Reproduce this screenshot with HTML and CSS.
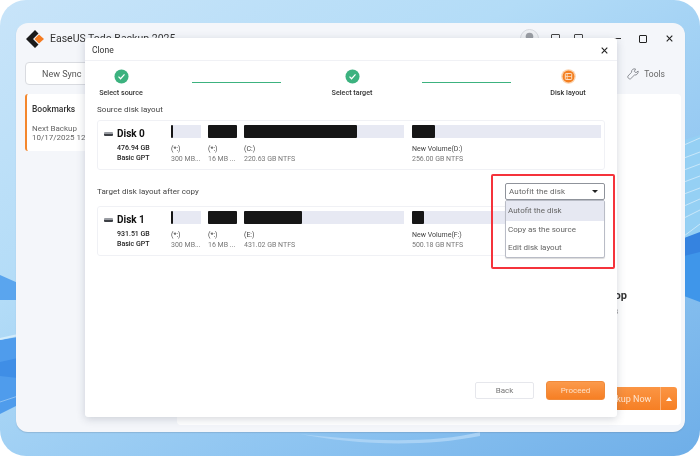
FILE: index.html
```html
<!DOCTYPE html>
<html lang="en">
<head>
<meta charset="utf-8">
<title>EaseUS Todo Backup - Clone</title>
<link rel="stylesheet" href="styles.css">
</head>
<body>
<div class="desktop">
  <svg class="waves" viewBox="0 0 700 456" preserveAspectRatio="none" aria-hidden="true">
    <path d="M0 275 L18 283 L18 300 L0 300 Z" fill="#5aa5ee"/>
    <path d="M0 340 L18 337 L18 405 L0 414 Z" fill="#4f9cec"/>
    <path d="M0 362 L18 358 L18 378 L0 376 Z" fill="#3f8ee6"/>
    <path d="M0 339 L18 335" stroke="#d3ecfb" stroke-width="2" fill="none"/>
    <path d="M0 402 L18 396" stroke="#8cc0f3" stroke-width="1" fill="none"/>
    <path d="M684 238 L700 231 L700 302 L684 296 Z" fill="#3f96ea"/>
    <path d="M684 238 L700 231 L700 252 L684 256 Z" fill="#3583e0"/>
    <path d="M684 140 L700 135 V232 L684 238 Z" fill="#95d0f4"/>
    <g stroke="#d6edfb" stroke-width="1" fill="none" opacity=".8">
      <path d="M684 145 L700 138"/><path d="M684 158 L700 152"/><path d="M684 170 L700 164"/>
      <path d="M684 182 L700 176"/><path d="M684 194 L700 188"/><path d="M684 206 L700 199"/>
      <path d="M684 218 L700 210"/><path d="M684 236 L700 224"/>
    </g>
    <path d="M300 434 C350 440 430 445 480 432 L480 436 C420 448 350 444 300 434 Z" fill="#a9d2f5"/>
  </svg>

  <div class="app">
    <header class="app-head">
      <div class="brand">
        <svg class="logo" viewBox="0 0 18 18" aria-hidden="true">
          <path d="M9 0 L12.5 3.5 L7 9 L12.5 14.5 L9 18 L0 9 Z" fill="#1a1a1a"/>
          <path d="M13 4.5 L18 9 L13 13.5 L8.5 9 Z" fill="#f47a20"/>
        </svg>
        <span class="brand-name">EaseUS Todo Backup 2025</span>
      </div>
      <div class="win-tools">
        <svg class="avatar" viewBox="0 0 20 20" aria-hidden="true">
          <circle cx="10" cy="10" r="9.5" fill="#eef0f3" stroke="#d5d7dc"/>
          <circle cx="10" cy="8" r="4" fill="#9a9da3"/>
          <path d="M3 18 C4 12 16 12 17 18 Z" fill="#9a9da3"/>
        </svg>
        <span class="tool-square"></span>
        <span class="tool-square tool-second"></span>
        <span class="win-min"></span>
        <span class="win-max"></span>
        <svg class="win-close" viewBox="0 0 10 10" aria-hidden="true"><path d="M1 1 L9 9 M9 1 L1 9" stroke="#222" stroke-width="1.6"/></svg>
      </div>
    </header>
    <div class="toolbar">
      <button class="new-sync">New Sync</button>
      <div class="tools">
        <svg class="wrench" viewBox="0 0 14 14" aria-hidden="true"><path d="M13 3.5 L10.5 5.5 L8.5 4 L10 1.2 C7.5 .2 5 2 5.3 5 L1 9.5 C.2 11 2.5 13.5 4.2 12.6 L8.6 8.3 C11.5 8.6 13.5 6 13 3.5 Z" fill="none" stroke="#7d8087"/></svg>
        <span>Tools</span>
      </div>
    </div>
    <div class="app-body">
      <aside class="bookmark">
        <div class="bm-title">Bookmarks</div>
        <div class="bm-sub">Next Backup</div>
        <div class="bm-sub">10/17/2025 12:00</div>
      </aside>
      <main class="panel">
        <div class="panel-info">
          <div class="panel-name">Desktop</div>
          <div class="panel-size">120 GB</div>
        </div>
        <div class="backup-btn">
          <span class="backup-label">Backup Now</span>
          <span class="backup-arrow"></span>
        </div>
      </main>
    </div>
  </div>

  <section class="dialog">
    <header class="dlg-head">
      <span>Clone</span>
      <svg class="dlg-close" viewBox="0 0 10 10" aria-hidden="true"><path d="M1 1 L9 9 M9 1 L1 9" stroke="#222" stroke-width="1.6"/></svg>
    </header>
    <div class="stepper">
      <div class="step">
        <svg class="step-icon" viewBox="0 0 16 16" aria-hidden="true"><circle cx="8" cy="8" r="7.5" fill="#3cb27f"/><path d="M4.8 8.2 L7 10.4 L11.2 5.8" fill="none" stroke="#fff" stroke-width="1.3"/></svg>
        <span>Select source</span>
      </div>
      <span class="step-line"></span>
      <div class="step">
        <svg class="step-icon" viewBox="0 0 16 16" aria-hidden="true"><circle cx="8" cy="8" r="7.5" fill="#3cb27f"/><path d="M4.8 8.2 L7 10.4 L11.2 5.8" fill="none" stroke="#fff" stroke-width="1.3"/></svg>
        <span>Select target</span>
      </div>
      <span class="step-line"></span>
      <div class="step">
        <svg class="step-icon" viewBox="0 0 16 16" aria-hidden="true"><circle cx="8" cy="8" r="7.8" fill="#fbd3ae"/><circle cx="8" cy="8" r="6.3" fill="#f47f20"/><rect x="4.6" y="4.8" width="6.8" height="6.4" rx=".8" fill="none" stroke="#fbe3cc" stroke-width="1"/><path d="M4.6 8 H11.4 M6.6 4.8 V11.2" stroke="#fbe3cc" stroke-width=".8"/></svg>
        <span>Disk layout</span>
      </div>
    </div>

    <h2 class="sec-title">Source disk layout</h2>
    <div class="disk-card">
      <div class="disk-info">
        <div class="disk-name"><span class="disk-glyph"></span>Disk 0</div>
        <div class="disk-meta">476.94 GB</div>
        <div class="disk-meta">Basic GPT</div>
      </div>
      <div class="parts">
        <div class="part p1"><div class="bar"><i style="width:2px"></i></div><b>(*:)</b><small>300 MB...</small></div>
        <div class="part p2"><div class="bar"><i style="width:100%"></i></div><b>(*:)</b><small>16 MB ...</small></div>
        <div class="part p3"><div class="bar"><i style="width:113px"></i></div><b>(C:)</b><small>220.63 GB NTFS</small></div>
        <div class="part p4"><div class="bar"><i style="width:23px"></i></div><b>New Volume(D:)</b><small>256.00 GB NTFS</small></div>
      </div>
    </div>

    <div class="target-row">
      <h2 class="sec-title">Target disk layout after copy</h2>
    </div>
    <div class="disk-card">
      <div class="disk-info">
        <div class="disk-name"><span class="disk-glyph"></span>Disk 1</div>
        <div class="disk-meta">931.51 GB</div>
        <div class="disk-meta">Basic GPT</div>
      </div>
      <div class="parts">
        <div class="part p1"><div class="bar"><i style="width:2px"></i></div><b>(*:)</b><small>300 MB...</small></div>
        <div class="part p2"><div class="bar"><i style="width:100%"></i></div><b>(*:)</b><small>16 MB ...</small></div>
        <div class="part p3"><div class="bar"><i style="width:58px"></i></div><b>(E:)</b><small>431.02 GB NTFS</small></div>
        <div class="part p4"><div class="bar"><i style="width:12px"></i></div><b>New Volume(F:)</b><small>500.18 GB NTFS</small></div>
      </div>
    </div>

    <footer class="dlg-foot">
      <button class="btn-back">Back</button>
      <button class="btn-proceed">Proceed</button>
    </footer>

    <div class="highlight">
      <div class="select"><span>Autofit the disk</span><span class="caret"></span></div>
      <ul class="menu">
        <li class="active">Autofit the disk</li>
        <li>Copy as the source</li>
        <li>Edit disk layout</li>
      </ul>
    </div>
  </section>
</div>
</body>
</html>
```

FILE: styles.css
```css
* { box-sizing: border-box; }
html, body { margin: 0; padding: 0; background: #fff; }
body { width: 700px; height: 456px; overflow: hidden; font-family: Roboto, "Noto Sans", sans-serif; color: #222; }
button { font-family: inherit; padding: 0; }
h2, ul { margin: 0; padding: 0; }

.desktop {
  position: relative; width: 700px; height: 456px; overflow: hidden; border-radius: 26px;
  background: linear-gradient(150deg, #c8e4f9 0%, #b3dcf7 35%, #8fc5f1 70%, #6eaee8 100%);
  filter: blur(.35px);
}
.waves { position: absolute; inset: 0; width: 100%; height: 100%; }

.app {
  position: absolute; left: 16px; top: 23px; width: 669px; height: 409px;
  background: #f4f6fa; border-radius: 12px; box-shadow: 0 1px 1px rgba(90,110,140,.25);
  display: flex; flex-direction: column; overflow: hidden;
}
.app-head { height: 31px; display: flex; align-items: center; justify-content: space-between; padding: 0 12px 0 10px; flex: none; }
.brand { display: flex; align-items: center; gap: 6px; }
.logo { width: 18px; height: 18px; }
.brand-name { font-size: 10.5px; color: #333; }
.win-tools { display: flex; align-items: center; }
.avatar { width: 19px; height: 19px; margin-right: 12px; }
.tool-square { width: 9px; height: 9px; border: 1.5px solid #444; border-radius: 1px; margin-right: 14px; }
.win-min { width: 8px; height: 1.5px; background: #333; margin-right: 18px; margin-left: 16px; }
.win-max { width: 8px; height: 8px; border: 1.5px solid #222; margin-right: 19px; border-radius: 1px; }
.win-close { width: 7px; height: 7px; }

.toolbar { height: 40px; display: flex; align-items: flex-start; justify-content: space-between; padding: 8px 20px 0 9px; flex: none; }
.new-sync { width: 150px; height: 23px; background: #fff; border: 1px solid #d9dbe0; border-radius: 4px; font-size: 9px; color: #555; text-align: left; padding-left: 16px; }
.tools { display: flex; align-items: center; gap: 5px; font-size: 8.5px; color: #666; height: 23px; }
.wrench { width: 12px; height: 12px; }

.app-body { flex: 1; display: flex; padding: 0 4px 7px 9px; min-height: 0; }
.bookmark { width: 120px; height: 57px; background: #fff; border-left: 2px solid #f4872d; border-radius: 3px; padding: 9px 0 0 5px; flex: none; }
.bm-title { font-size: 8.5px; font-weight: 500; color: #333; margin-bottom: 9px; line-height: 12px; }
.bm-sub { font-size: 8px; color: #666; line-height: 9px; white-space: nowrap; }
.panel { position: relative; flex: 1; background: #fff; border-radius: 4px; margin-left: 32px; }
.panel-info { position: absolute; right: 54px; top: 195px; }
.panel-name { font-size: 11px; font-weight: 700; color: #333; line-height: 14px; }
.panel-size { font-size: 8px; color: #888; margin-top: 4px; margin-left: 6px; line-height: 10px; }
.backup-btn { position: absolute; right: 4px; bottom: 15px; width: 120px; height: 23px; background: linear-gradient(#fb9544, #f67f24); border-radius: 3px; display: flex; align-items: center; justify-content: space-between; color: #fde5d0; font-size: 9px; white-space: nowrap; }
.backup-label { margin-left: 44px; }
.backup-arrow { width: 17px; height: 100%; border-left: 1px solid #fbb27a; position: relative; }
.backup-arrow::after { content: ""; position: absolute; left: 5px; top: 10px; border: 3px solid transparent; border-top: 0; border-bottom: 4px solid #fff; }

.dialog {
  position: absolute; left: 85px; top: 38px; width: 532px; height: 379px;
  background: #fff; border-radius: 3px; box-shadow: 0 2px 8px rgba(60,70,90,.22);
  display: flex; flex-direction: column; padding: 0 12px;
}
.dlg-head { margin: 0 -12px; height: 23px; flex: none; display: flex; align-items: center; justify-content: space-between; padding: 2px 9px 0 7px; border-bottom: 1px solid #f0f1f5; font-size: 8.5px; color: #333; }
.dlg-close { width: 7px; height: 7px; }

.stepper { display: flex; align-items: flex-start; height: 41px; flex: none; padding-top: 8px; margin: 0 -12px; }
.step { width: 70px; display: flex; flex-direction: column; align-items: center; gap: 4px; font-size: 7.2px; color: #333; font-weight: 500; white-space: nowrap; line-height: 10px; margin-left: 1px; }
.step-icon { width: 15px; height: 15px; flex: none; }
.step-line { height: 1px; background: #3cb27f; width: 89px; margin-top: 13px; flex: none; }
.stepper .step:nth-child(3) { margin-left: 0; }
.stepper .step:nth-child(5) { margin-left: -13px; }
.stepper .step-line:nth-child(2) { margin-left: 36px; margin-right: 36px; }
.stepper .step-line:nth-child(4) { margin-left: 35px; margin-right: 35px; }

.sec-title { font-size: 8px; font-weight: 400; color: #444; line-height: 12px; letter-spacing: .05px; margin: 2px 0 4px; }
.disk-card { width: 508px; height: 50px; flex: none; border: 1px solid #f0f1f5; border-radius: 3px; display: flex; padding: 4px 4px 0 6px; }
.disk-info { width: 67px; flex: none; padding-top: 2px; }
.disk-name { display: flex; align-items: center; font-size: 10px; font-weight: 700; color: #111; line-height: 13px; margin-bottom: 3px; }
.disk-glyph { width: 9px; height: 4px; border-radius: 1px; background: linear-gradient(#9a9da3 50%, #3d4045 50%); margin-right: 4px; }
.disk-meta { font-size: 7px; font-weight: 500; color: #222; line-height: 10px; margin-left: 13px; white-space: nowrap; }
.parts { display: flex; gap: 7px; }
.part { display: flex; flex-direction: column; flex: none; }
.p1 { width: 30px; }
.p2 { width: 29px; }
.p3 { width: 160px; }
.p4 { width: 189px; margin-left: 1px; }
.bar { height: 13px; background: #e7e9f3; margin-bottom: 6px; }
.bar i { display: block; height: 100%; background: #161616; border-radius: 1px; }
.part b { font-size: 7px; font-weight: 400; color: #444; line-height: 10px; white-space: nowrap; }
.part small { font-size: 7px; color: #777; line-height: 10px; white-space: nowrap; }

.target-row { height: 36px; flex: none; display: flex; align-items: flex-end; }
.target-row .sec-title { margin-bottom: 8px; }

.dlg-foot { margin-top: auto; height: 36px; flex: none; display: flex; align-items: flex-start; justify-content: flex-end; gap: 12px; }
.btn-back { width: 59px; height: 17px; margin-top: 1px; background: #fff; border: 1px solid #e6e7ec; border-radius: 2px; font-size: 8px; color: #777; }
.btn-proceed { width: 59px; height: 19px; background: linear-gradient(#fb9a4c, #f67f24); border: 1px solid #f08a3a; border-radius: 3px; font-size: 8px; color: #fde0c8; }

.highlight { position: absolute; left: 406px; top: 136px; width: 124px; height: 95px; border: 2px solid #f5333b; border-radius: 2px; padding: 7px 0 0 12px; }
.select { width: 100px; height: 17px; background: #fff; border: 1px solid #8f939b; border-radius: 2px; display: flex; align-items: center; justify-content: space-between; padding: 0 6px 0 3px; font-size: 8px; color: #666; letter-spacing: .15px; }
.caret { border: 3px solid transparent; border-bottom: 0; border-top: 3px solid #222; }
.menu { width: 100px; height: 58px; background: #fff; border: 1px solid #b9bcc6; border-radius: 2px; list-style: none; box-shadow: 0 1px 1px rgba(0,0,0,.15); padding-top: 1px; }
.menu li { height: 18.5px; font-size: 8px; line-height: 18.5px; color: #666; padding-left: 2px; }
.menu li.active { background: #e6e8f2; margin-top: -1px; height: 19.5px; line-height: 20.5px; }
```
